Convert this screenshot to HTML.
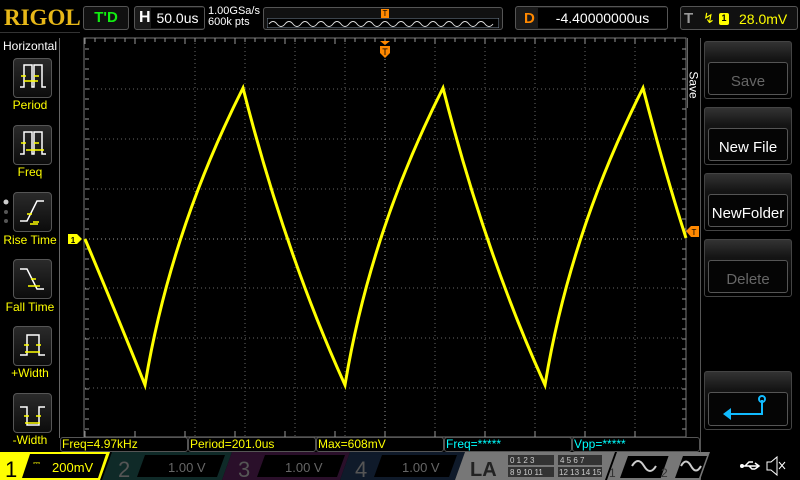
<!DOCTYPE html>
<html><head><meta charset="utf-8"><style>
*{margin:0;padding:0;box-sizing:border-box}
body{width:800px;height:480px;background:#000;overflow:hidden;position:relative;font-family:"Liberation Sans",sans-serif;color:#fff}
.a{position:absolute}
.btn{position:absolute;border:1px solid #555;border-radius:4px;background:linear-gradient(#2a2a2a,#0c0c0c)}
.lbl{position:absolute;left:0;width:60px;text-align:center;color:#ff0;font-size:12px}
.rb{position:absolute;left:704px;width:88px;border:1px solid #444;border-radius:3px;background:linear-gradient(#333,#151515 30%,#000)}
.rb .in{position:absolute;left:3px;right:3px;bottom:3px;top:20px;border:1px solid #555;border-radius:3px;background:#050505;text-align:center;font-size:15px}
.mb{position:absolute;top:437px;height:15px;border:1px solid #555;border-radius:3px;font-size:12px;line-height:13px;padding-left:1px}
</style></head><body>
<div class="a" style="left:4px;top:5px;font-family:'Liberation Serif',serif;font-weight:bold;font-size:23px;color:#e8b818">RIGOL</div>
<div class="a" style="left:83px;top:6px;width:46px;height:24px;border:1px solid #555;border-radius:3px;background:#111;color:#1e1;font-weight:bold;font-size:15px;text-align:center;line-height:22px">T'D</div>
<div class="a" style="left:134px;top:6px;width:71px;height:24px;border:1px solid #555;border-radius:3px;background:#1a1a1a"><span class="a" style="left:4px;top:2px;font-weight:bold;font-size:16px">H</span><div class="a" style="left:16px;top:1px;width:53px;height:20px;background:#000;font-size:14px;text-align:center;line-height:20px">50.0us</div></div>
<div class="a" style="left:208px;top:6px;font-size:11px;line-height:11px">1.00GSa/s<br>600k pts</div>
<div class="a" style="left:263px;top:7px;width:240px;height:23px;border:1px solid #555;border-radius:3px;background:#111">
<svg class="a" style="left:3px;top:10px" width="232" height="10"><rect x="0" y="0" width="232" height="10" fill="#000" stroke="#789" /><path d="M2 6 q4 -5 8 0 t8 0 t8 0 t8 0 t8 0 t8 0 t8 0 t8 0 t8 0 t8 0 t8 0 t8 0 t8 0 t8 0 t8 0 t8 0 t8 0 t8 0 t8 0 t8 0 t8 0 t8 0 t8 0 t8 0 t8 0 t8 0 t8 0 t8 0" stroke="#ddd" fill="none"/></svg>
<div class="a" style="left:117px;top:1px;width:8px;height:9px;background:#f80;font-size:8px;color:#000;text-align:center;line-height:9px">T</div></div>
<div class="a" style="left:515px;top:6px;width:153px;height:24px;border:1px solid #555;border-radius:3px;background:#1a1a1a"><span class="a" style="left:8px;top:3px;color:#f80;font-weight:bold;font-size:15px">D</span><div class="a" style="left:22px;top:1px;width:129px;height:20px;background:#000;font-size:14px;text-align:center;line-height:20px">-4.40000000us</div></div>
<div class="a" style="left:680px;top:6px;width:118px;height:24px;border:1px solid #555;border-radius:3px;background:#111"><span class="a" style="left:3px;top:3px;color:#999;font-weight:bold;font-size:15px">T</span><span class="a" style="left:22px;top:3px;color:#ff0;font-size:14px">&#x21AF;</span><div class="a" style="left:38px;top:6px;width:10px;height:12px;background:#ff0;border-radius:2px;color:#000;font-size:9px;text-align:center;font-weight:bold">1</div><span class="a" style="left:58px;top:4px;color:#ff0;font-size:14px">28.0mV</span></div>
<div class="a" style="left:0;top:32px;width:80px;height:1px;background:#333"></div>
<div class="a" style="left:59px;top:38px;width:1px;height:400px;background:#666"></div>
<div class="a" style="left:3px;top:39px;font-size:12px">Horizontal</div>
<div class="btn" style="left:13px;top:58px;width:39px;height:40px"></div><div class="lbl" style="top:98px">Period</div>
<div class="btn" style="left:13px;top:125px;width:39px;height:40px"></div><div class="lbl" style="top:165px">Freq</div>
<div class="btn" style="left:13px;top:192px;width:39px;height:40px"></div><div class="lbl" style="top:233px">Rise Time</div>
<div class="btn" style="left:13px;top:259px;width:39px;height:40px"></div><div class="lbl" style="top:300px">Fall Time</div>
<div class="btn" style="left:13px;top:326px;width:39px;height:40px"></div><div class="lbl" style="top:366px">+Width</div>
<div class="btn" style="left:13px;top:393px;width:39px;height:40px"></div><div class="lbl" style="top:433px">-Width</div>
<svg class="a" style="left:0;top:0" width="60" height="440" fill="none" stroke-width="1.5">
<g stroke="#fff"><path d="M20 87h4v-22h8v22h2v-22h8v22h4"/><path d="M20 154h4v-22h8v22h2v-22h8v22h4"/><path d="M20 221h7l10-20h7"/><path d="M20 269h7l10 20h7"/><path d="M20 355h7v-20h12v20h6"/><path d="M20 407h7v18h12v-18h6"/></g>
<g stroke="#ff0"><path d="M21 76h5M34 76h5M24 81h14M21 143h5M34 143h5M26 150h18M27 214h5M33 222h6M30 224h8M31 279h5M34 286h6M28 286h8M24 345h5M36 345h5M25 352h15M24 416h5M36 416h5M25 423h15"/></g>
<circle cx="6" cy="202" r="2.5" fill="#ccc" stroke="none"/><circle cx="6" cy="212" r="2" fill="#555" stroke="none"/><circle cx="6" cy="221" r="2" fill="#555" stroke="none"/>
</svg>
<svg class="a" style="left:60px;top:33px" width="640" height="405">
<rect x="24" y="5" width="602" height="399" fill="none" stroke="#777"/>
<g stroke="#666" stroke-dasharray="1 3">
<path d="M135 6v398M185 6v398M235 6v398M285 6v398M375 6v398M425 6v398M475 6v398M525 6v398M575 6v398"/>
<path d="M25 56h600M25 106h600M25 156h600M25 255h600M25 305h600M25 355h600"/>
<path d="M325 6v398M25 206h600" stroke="#999"/>
</g>
<g stroke="#999"><path d="M25 5v6M35 5v4M45 5v4M55 5v4M65 5v4M75 5v6M85 5v4M95 5v4M105 5v4M115 5v4M125 5v6M135 5v4M145 5v4M155 5v4M165 5v4M175 5v6M185 5v4M195 5v4M205 5v4M215 5v4M225 5v6M235 5v4M245 5v4M255 5v4M265 5v4M275 5v6M285 5v4M295 5v4M305 5v4M315 5v4M325 5v6M335 5v4M345 5v4M355 5v4M365 5v4M375 5v6M385 5v4M395 5v4M405 5v4M415 5v4M425 5v6M435 5v4M445 5v4M455 5v4M465 5v4M475 5v6M485 5v4M495 5v4M505 5v4M515 5v4M525 5v6M535 5v4M545 5v4M555 5v4M565 5v4M575 5v6M585 5v4M595 5v4M605 5v4M615 5v4"/>
<path d="M25 398v6M75 398v6M125 398v6M175 398v6M225 398v6M275 398v6M325 398v6M375 398v6M425 398v6M475 398v6M525 398v6M575 398v6"/>
<path d="M626 16h-4M626 26h-4M626 36h-4M626 46h-4M626 56h-4M626 66h-4M626 76h-4M626 86h-4M626 96h-4M626 106h-4M626 116h-4M626 126h-4M626 136h-4M626 146h-4M626 156h-4M626 166h-4M626 176h-4M626 186h-4M626 196h-4M626 216h-4M626 226h-4M626 236h-4M626 246h-4M626 256h-4M626 266h-4M626 276h-4M626 286h-4M626 296h-4M626 306h-4M626 316h-4M626 326h-4M626 336h-4M626 346h-4M626 356h-4M626 366h-4M626 376h-4M626 386h-4M626 396h-4"/>
<path d="M25 16h4M25 26h4M25 36h4M25 46h4M25 56h4M25 66h4M25 76h4M25 86h4M25 96h4M25 106h4M25 116h4M25 126h4M25 136h4M25 146h4M25 156h4M25 166h4M25 176h4M25 186h4M25 196h4M25 216h4M25 226h4M25 236h4M25 246h4M25 256h4M25 266h4M25 276h4M25 286h4M25 296h4M25 306h4M25 316h4M25 326h4M25 336h4M25 346h4M25 356h4M25 366h4M25 376h4M25 386h4M25 396h4"/></g>
<path d="M25 206 Q52 270 85 352 Q110 200 183 55 Q225 220 285 352 Q310 200 383 55 Q425 220 485 352 Q510 200 583 55 Q605 140 626 205" stroke="#ff0" stroke-width="3" fill="none"/>
<path d="M320 8h10l-5 4z M320 13h10v7l-5 5l-5-5z" fill="#f80"/><text x="325" y="22" font-size="9" text-anchor="middle" fill="#000" font-family="Liberation Sans">T</text>
<path d="M8 201h9l5 5l-5 5h-9z" fill="#ff0"/><text x="13" y="210" font-size="8" text-anchor="middle" fill="#000" font-family="Liberation Sans" font-weight="bold">1</text>
<path d="M626 198l5-5h8v11h-8z" fill="#f80"/><text x="634" y="202" font-size="8" text-anchor="middle" fill="#000" font-family="Liberation Sans">T</text>
</svg>
<div class="a" style="left:700px;top:38px;width:1px;height:442px;background:#555"></div>
<div class="a" style="left:687px;top:38px;width:1px;height:70px;background:#666"></div>
<div class="a" style="left:680px;top:78px;transform:rotate(90deg);font-size:12px">Save</div>
<div class="rb" style="top:41px;height:58px"><div class="in" style="color:#666;line-height:38px">Save</div></div>
<div class="rb" style="top:107px;height:58px"><div class="in" style="line-height:38px">New File</div></div>
<div class="rb" style="top:173px;height:58px"><div class="in" style="line-height:38px">NewFolder</div></div>
<div class="rb" style="top:239px;height:58px"><div class="in" style="color:#666;line-height:38px">Delete</div></div>
<div class="rb" style="top:371px;height:59px"><div class="in"><svg width="80" height="36"><path d="M53 7v14h-32" stroke="#1bf" stroke-width="2" fill="none"/><circle cx="53" cy="6" r="3" stroke="#1bf" stroke-width="2" fill="none"/><path d="M14 21l8-6v12z" fill="#1bf"/></svg></div></div>
<div class="mb" style="left:60px;width:128px;color:#ff0">Freq=4.97kHz</div>
<div class="mb" style="left:188px;width:128px;color:#ff0">Period=201.0us</div>
<div class="mb" style="left:316px;width:128px;color:#ff0">Max=608mV</div>
<div class="mb" style="left:444px;width:128px;color:#0ff">Freq=*****</div>
<div class="mb" style="left:572px;width:128px;color:#0ff">Vpp=*****</div>
<svg class="a" style="left:0;top:452px" width="800" height="28" font-family="Liberation Sans">
<path d="M0 0h110l-10 28h-100z" fill="#ff0"/><path d="M30 2h76l-8 24h-76z" fill="#000"/>
<text x="5" y="25" font-size="22" fill="#000">1</text><text x="52" y="20" font-size="13" fill="#ff0">200mV</text><text x="33" y="14" font-size="9" fill="#ff0">⎓</text>
<path d="M112 0h120l-10 28h-120z" fill="#0f2a28"/><path d="M145 3h80l-8 22h-80z" fill="#000"/><text x="118" y="25" font-size="22" fill="#555">2</text><text x="168" y="20" font-size="13" fill="#666">1.00 V</text>
<path d="M232 0h118l-10 28h-118z" fill="#2a0f2a"/><path d="M265 3h80l-8 22h-80z" fill="#000"/><text x="238" y="25" font-size="22" fill="#555">3</text><text x="285" y="20" font-size="13" fill="#666">1.00 V</text>
<path d="M350 0h115l-10 28h-115z" fill="#0f1a2a"/><path d="M382 3h75l-8 22h-75z" fill="#000"/><text x="355" y="25" font-size="22" fill="#555">4</text><text x="402" y="20" font-size="13" fill="#666">1.00 V</text>
<path d="M465 0h150l-10 28h-150z" fill="#777"/><text x="470" y="24" font-size="20" font-weight="bold" fill="#222">LA</text>
<g font-size="8" fill="#ccc"><rect x="508" y="3" width="46" height="10" fill="#333"/><rect x="508" y="15" width="46" height="10" fill="#333"/><rect x="558" y="3" width="44" height="10" fill="#333"/><rect x="558" y="15" width="44" height="10" fill="#333"/>
<text x="510" y="11">0 1 2 3</text><text x="510" y="23">8 9 10 11</text><text x="560" y="11">4 5 6 7</text><text x="559" y="23">12 13 14 15</text></g>
<path d="M617 0h60l-10 28h-60z" fill="#777"/><path d="M628 4h45l-8 22h-45z" fill="#000"/><text x="609" y="25" font-size="12" fill="#333">1</text><path d="M632 14q6-10 12 0t12 0" stroke="#ccc" stroke-width="2" fill="none"/>
<path d="M670 0h40l-10 28h-40z" fill="#777"/><path d="M683 4h24l-8 22h-24z" fill="#000"/><text x="661" y="25" font-size="12" fill="#333">2</text><path d="M681 14q5-9 10 0t10 0" stroke="#ccc" stroke-width="2" fill="none"/>
<path d="M741 14h18M755 11l4 3l-4 3M745 14l4-4h4M749 14l3 3h3" stroke="#fff" stroke-width="1.5" fill="none"/><circle cx="742" cy="14" r="2" fill="#fff"/><path d="M767 10h4l6-5v18l-6-5h-4z" stroke="#fff" fill="none"/><path d="M779 10l6 7M785 10l-6 7" stroke="#fff"/>
</svg>
</body></html>
